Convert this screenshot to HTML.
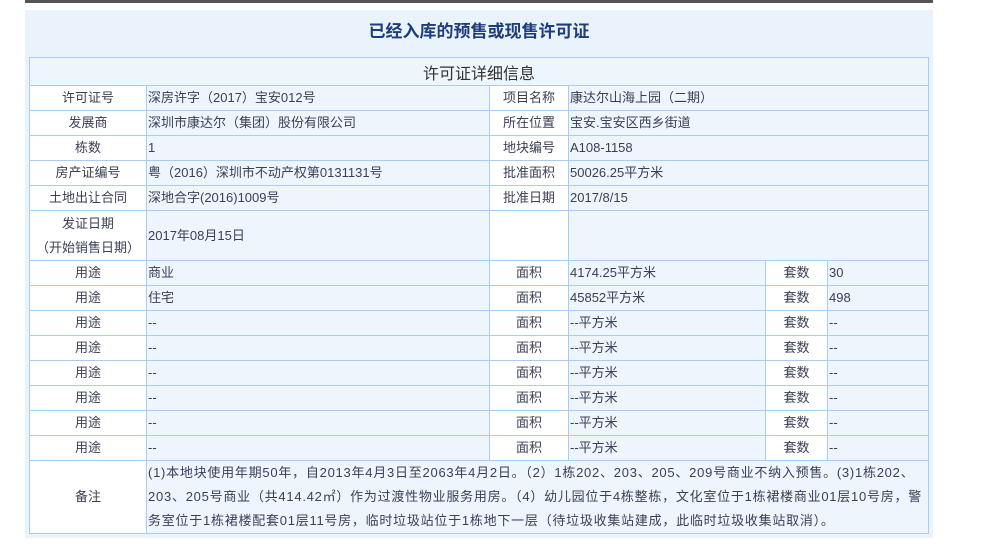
<!DOCTYPE html>
<html><head><meta charset="utf-8"><style>
body{margin:0;width:1000px;height:544px;background:#fff;overflow:hidden;font-family:"Liberation Sans","Noto Sans CJK SC",sans-serif;}
.strip{position:absolute;left:25px;top:0;width:908px;height:3px;background:#555;}
.panel{position:absolute;left:25px;top:10px;width:908px;height:528px;background:#eaf3fc;}
.title{position:absolute;left:0;top:10px;width:908px;text-align:center;font-size:17px;font-weight:bold;color:#1d3c7c;line-height:24px;}
table{position:absolute;left:4px;top:47px;border-collapse:collapse;table-layout:fixed;width:899px;font-size:13px;color:#3a3f55;}
td{border:1px solid #a9cdef;height:24px;padding:0 1px;background:#eef5fd;line-height:24px;white-space:nowrap;overflow:hidden;}
td.l{background:#fff;text-align:center;}
th{border:1px solid #a9cdef;height:25px;font-weight:normal;font-size:16px;color:#333;background:#eef5fd;}
td.r{white-space:normal;line-height:24px;padding:0 1px;letter-spacing:0.75px;}
</style></head><body>
<div class="strip"></div>
<div class="panel">
<div class="title">已经入库的预售或现售许可证</div>
<table>
<colgroup><col style="width:117px"><col style="width:343px"><col style="width:79px"><col style="width:197px"><col style="width:62px"><col style="width:101px"></colgroup>
<tr><th colspan="6">许可证详细信息</th></tr>
<tr><td class="l">许可证号</td><td>深房许字（2017）宝安012号</td><td class="l">项目名称</td><td colspan="3">康达尔山海上园（二期）</td></tr>
<tr><td class="l">发展商</td><td>深圳市康达尔（集团）股份有限公司</td><td class="l">所在位置</td><td colspan="3">宝安.宝安区西乡街道</td></tr>
<tr><td class="l">栋数</td><td>1</td><td class="l">地块编号</td><td colspan="3">A108-1158</td></tr>
<tr><td class="l">房产证编号</td><td>粤（2016）深圳市不动产权第0131131号</td><td class="l">批准面积</td><td colspan="3">50026.25平方米</td></tr>
<tr><td class="l">土地出让合同</td><td>深地合字(2016)1009号</td><td class="l">批准日期</td><td colspan="3">2017/8/15</td></tr>
<tr><td class="l" style="height:49px;line-height:24px;">发证日期<br>（开始销售日期）</td><td>2017年08月15日</td><td class="l"></td><td colspan="3"></td></tr>
<tr><td class="l">用途</td><td>商业</td><td class="l">面积</td><td>4174.25平方米</td><td class="l">套数</td><td>30</td></tr>
<tr><td class="l">用途</td><td>住宅</td><td class="l">面积</td><td>45852平方米</td><td class="l">套数</td><td>498</td></tr>
<tr><td class="l">用途</td><td>--</td><td class="l">面积</td><td>--平方米</td><td class="l">套数</td><td>--</td></tr>
<tr><td class="l">用途</td><td>--</td><td class="l">面积</td><td>--平方米</td><td class="l">套数</td><td>--</td></tr>
<tr><td class="l">用途</td><td>--</td><td class="l">面积</td><td>--平方米</td><td class="l">套数</td><td>--</td></tr>
<tr><td class="l">用途</td><td>--</td><td class="l">面积</td><td>--平方米</td><td class="l">套数</td><td>--</td></tr>
<tr><td class="l">用途</td><td>--</td><td class="l">面积</td><td>--平方米</td><td class="l">套数</td><td>--</td></tr>
<tr><td class="l">用途</td><td>--</td><td class="l">面积</td><td>--平方米</td><td class="l">套数</td><td>--</td></tr>
<tr><td class="l" style="height:72px">备注</td><td colspan="5" class="r">(1)本地块使用年期50年，自2013年4月3日至2063年4月2日。（2）1栋202、203、205、209号商业不纳入预售。(3)1栋202、<br>203、205号商业（共414.42㎡）作为过渡性物业服务用房。（4）幼儿园位于4栋整栋，文化室位于1栋裙楼商业01层10号房，警<br>务室位于1栋裙楼配套01层11号房，临时垃圾站位于1栋地下一层（待垃圾收集站建成，此临时垃圾收集站取消）。</td></tr>
</table>
</div>
</body></html>
